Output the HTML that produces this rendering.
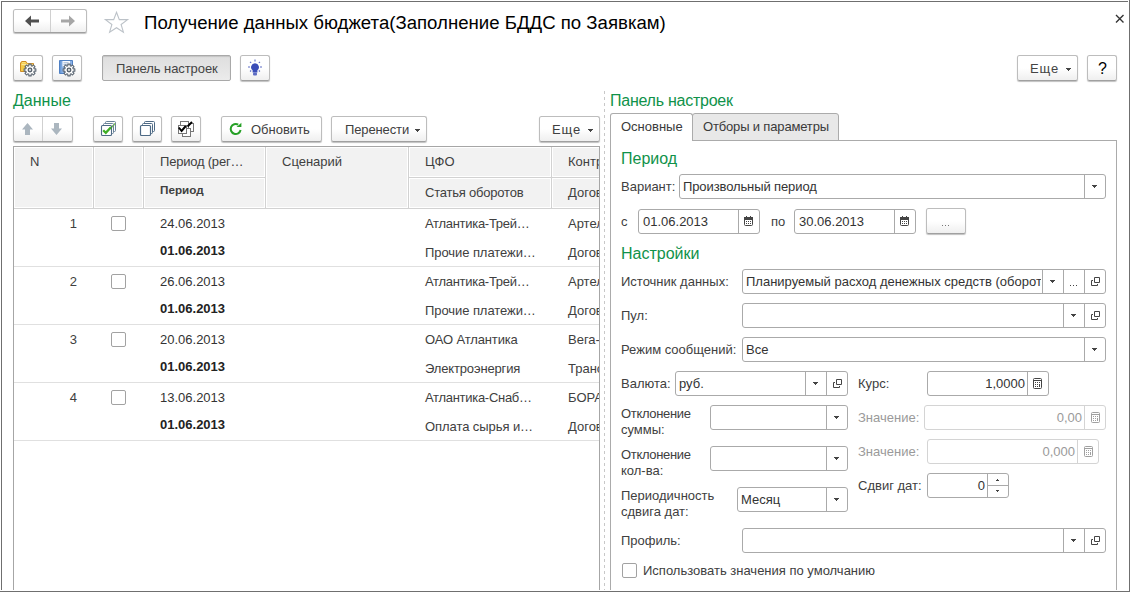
<!DOCTYPE html>
<html><head><meta charset="utf-8"><style>
*{margin:0;padding:0;box-sizing:border-box}
html,body{width:1130px;height:592px;overflow:hidden;background:#fff}
body{position:relative;font-family:"Liberation Sans",sans-serif;font-size:13px;color:#444}
.a{position:absolute}
.t{position:absolute;white-space:nowrap;line-height:16px;font-size:13px;color:#444}
.btn{position:absolute;border:1px solid #bdbdbd;border-bottom-color:#a0a0a0;border-radius:2.5px;background:linear-gradient(#fff 0%,#fff 50%,#efefef 100%);box-shadow:0 1px 1px rgba(0,0,0,.25)}
.inp{position:absolute;border:1px solid #aaaaaa;border-radius:3px;background:#fff}
.dis{border-color:#d4d4d4}
.grn{position:absolute;white-space:nowrap;color:#10924a;font-size:16px;line-height:20px}
.hd{position:absolute;background:#f2f2f2;box-shadow:inset 0 0 0 1px #fff}
.cb{position:absolute;width:15px;height:15px;border:1px solid #a2a2a2;border-radius:2px;background:#fff}
.b{font-weight:bold}
svg{position:absolute;overflow:visible}
</style></head><body>
<!-- window border -->
<div class="a" style="left:1px;top:1px;width:1127px;height:1px;background:#6f6f6f"></div><div class="a" style="left:1px;top:1px;width:1px;height:589px;background:#6f6f6f"></div><div class="a" style="left:1129px;top:0;width:1px;height:592px;background:#6f6f6f"></div><div class="a" style="left:0;top:591px;width:1130px;height:1px;background:#6f6f6f"></div>
<div class="btn" style="left:13px;top:9px;width:74px;height:24px;"></div>
<div class="a" style="left:50px;top:10px;width:1px;height:22px;background:#d0d0d0"></div>
<svg style="left:25px;top:15px" width="15" height="12" viewBox="0 0 15 12"><path d="M0 6L6 0.5V4.5H14V7.5H6V11.5Z" fill="#505050"/></svg>
<svg style="left:61px;top:15px" width="15" height="12" viewBox="0 0 15 12"><path d="M14 6L8 0.5V4.5H0V7.5H8V11.5Z" fill="#a6a6a6"/></svg>
<svg style="left:104px;top:10px" width="25" height="24" viewBox="0 0 25 24"><path d="M12.5 2.3L15.3 9.6L23.6 9.6L17.1 14.5L19.4 22.2L12.5 17.7L5.6 22.2L7.9 14.5L1.4 9.6L9.7 9.6Z" fill="none" stroke="#bcc2c8" stroke-width="1.1"/></svg>
<div class="t" style="left:144px;top:12px;font-size:18.63px;line-height:22px;color:#000">Получение данных бюджета(Заполнение БДДС по Заявкам)</div>
<svg style="left:1115px;top:14px" width="10" height="10" viewBox="0 0 10 10"><path d="M1 1L8.5 8.5M8.5 1L1 8.5" stroke="#333" stroke-width="1.4"/></svg>
<div class="btn" style="left:13px;top:55px;width:30px;height:26px;"></div>
<svg style="left:19px;top:59px" width="20" height="20" viewBox="0 0 20 20"><path d="M1.5 4V12.5H14.5V4.5H8.2L7 2.5H3L2 3.2Z" fill="#f4cb48" stroke="#cf8c26" stroke-width="1"/><path d="M2.5 5.5H13.5" stroke="#fde79a" stroke-width="1.3"/><path d="M3 3.5H6.5" stroke="#fbe07a" stroke-width="1"/><path d="M15.15 9.89 L16.87 9.75 L16.87 12.25 L15.15 12.11 L14.72 13.15 L16.03 14.27 L14.27 16.03 L13.15 14.72 L12.11 15.15 L12.25 16.87 L9.75 16.87 L9.89 15.15 L8.85 14.72 L7.73 16.03 L5.97 14.27 L7.28 13.15 L6.85 12.11 L5.13 12.25 L5.13 9.75 L6.85 9.89 L7.28 8.85 L5.97 7.73 L7.73 5.97 L8.85 7.28 L9.89 6.85 L9.75 5.13 L12.25 5.13 L12.11 6.85 L13.15 7.28 L14.27 5.97 L16.03 7.73 L14.72 8.85Z" fill="#fff" stroke="#5a6571" stroke-width="1.05" stroke-linejoin="round"/><circle cx="11" cy="11" r="1.8" fill="#d5d8db" stroke="#55606b" stroke-width="1.3"/></svg>
<div class="btn" style="left:52px;top:55px;width:30px;height:26px;"></div>
<svg style="left:58px;top:59px" width="20" height="20" viewBox="0 0 20 20"><path d="M1.5 1.5h13v13h-13Z" fill="#8cb2e6" stroke="#4f80c4" stroke-width="1"/><rect x="2" y="2" width="1.5" height="12" fill="#6a9ad8"/><rect x="4.5" y="2" width="7.5" height="5.5" fill="#f7f9fd"/><path d="M5.5 3.8h5M5.5 5.6h4" stroke="#8aa4c8" stroke-width="0.8"/><path d="M15.15 9.89 L16.87 9.75 L16.87 12.25 L15.15 12.11 L14.72 13.15 L16.03 14.27 L14.27 16.03 L13.15 14.72 L12.11 15.15 L12.25 16.87 L9.75 16.87 L9.89 15.15 L8.85 14.72 L7.73 16.03 L5.97 14.27 L7.28 13.15 L6.85 12.11 L5.13 12.25 L5.13 9.75 L6.85 9.89 L7.28 8.85 L5.97 7.73 L7.73 5.97 L8.85 7.28 L9.89 6.85 L9.75 5.13 L12.25 5.13 L12.11 6.85 L13.15 7.28 L14.27 5.97 L16.03 7.73 L14.72 8.85Z" fill="#fff" stroke="#5a6571" stroke-width="1.05" stroke-linejoin="round"/><circle cx="11" cy="11" r="1.8" fill="#d5d8db" stroke="#55606b" stroke-width="1.3"/></svg>
<div class="a" style="left:102px;top:55px;width:129px;height:26px;border:1px solid #a9a9a9;border-radius:2px;background:linear-gradient(#dedede,#ebebeb);box-shadow:inset 0 1px 1px rgba(0,0,0,.12)"></div>
<div class="t" style="left:116px;top:61px;color:#444;letter-spacing:-0.07px;">Панель настроек</div>
<div class="btn" style="left:240px;top:55px;width:30px;height:26px;"></div>
<svg style="left:247px;top:59px" width="16" height="18" viewBox="0 0 16 18"><path d="M8 4.3a3.9 3.9 0 0 1 2.4 7V13.5H5.6V11.3A3.9 3.9 0 0 1 8 4.3Z" fill="#3a4db8"/><rect x="6" y="13.5" width="4" height="3" rx="1" fill="#5d6cc4"/><path d="M8 0.5v2M3 2.8l1.2 1.2M13 2.8l-1.2 1.2M1 8h2M13 8h2M3 12.5l1.2-1M13 12.5l-1.2-1" stroke="#5a6ac6" stroke-width="1.05"/></svg>
<div class="btn" style="left:1017px;top:55px;width:61px;height:26px;"></div>
<div class="t" style="left:1030px;top:61px;color:#444;letter-spacing:0.9px;">Еще</div>
<svg style="left:1066px;top:68px" width="5" height="3" viewBox="0 0 5 3"><rect x="0" y="0" width="5" height="1" fill="#444"/><rect x="1" y="1" width="3" height="1" fill="#444"/><rect x="2" y="2" width="1" height="1" fill="#444"/></svg>
<div class="btn" style="left:1087px;top:55px;width:30px;height:26px;"></div>
<div class="t" style="left:1098px;top:61px;color:#000;font-size:16px">?</div>
<div class="grn" style="left:13px;top:91px">Данные</div>
<div class="btn" style="left:13px;top:116px;width:60px;height:26px;"></div>
<div class="a" style="left:42px;top:117px;width:1px;height:24px;background:#d0d0d0"></div>
<svg style="left:22px;top:123px" width="11" height="12" viewBox="0 0 11 12"><path d="M5.5 0L11 6.6H8V12H3V6.6H0Z" fill="#abb6bf"/></svg>
<svg style="left:51px;top:123px" width="11" height="12" viewBox="0 0 11 12"><path d="M5.5 12L11 5.4H8V0H3V5.4H0Z" fill="#abb6bf"/></svg>
<div class="btn" style="left:93px;top:116px;width:30px;height:26px;"></div>
<svg style="left:100px;top:120px" width="17" height="17" viewBox="0 0 17 17"><rect x="5.5" y="1.5" width="10" height="10" rx="1" fill="#fff" stroke="#6a8399"/><path d="M8.5 6.5l2 2 4.5-5" fill="none" stroke="#7cc35a" stroke-width="1.8"/><rect x="3.5" y="3.5" width="10" height="10" rx="1" fill="#fff" stroke="#6a8399"/><path d="M6.5 8.5l2 2 4.5-5" fill="none" stroke="#6abb48" stroke-width="1.8"/><rect x="1.5" y="5.5" width="10" height="10" rx="1" fill="#fff" stroke="#4e6a85" stroke-width="1.1"/><path d="M3.2 10.2l2.6 2.6 5.2-5.6" fill="none" stroke="#3fae25" stroke-width="2.3"/></svg>
<div class="btn" style="left:132px;top:116px;width:30px;height:26px;"></div>
<svg style="left:139px;top:120px" width="17" height="17" viewBox="0 0 17 17"><rect x="5.5" y="1.5" width="10" height="10" rx="1" fill="#fff" stroke="#4e6a85"/><rect x="3.5" y="3.5" width="10" height="10" rx="1" fill="#fff" stroke="#4e6a85"/><rect x="1.5" y="5.5" width="10" height="10" rx="1" fill="#fff" stroke="#4e6a85" stroke-width="1.2"/></svg>
<div class="btn" style="left:171px;top:116px;width:30px;height:26px;"></div>
<svg style="left:177px;top:120px" width="18" height="18" viewBox="0 0 18 18"><rect x="3.5" y="1.5" width="8" height="8" fill="#fff" stroke="#777"/><rect x="11.5" y="3.5" width="5" height="8" fill="#fff" stroke="#777"/><rect x="5.5" y="8.5" width="8" height="8" fill="#fff" stroke="#777"/><rect x="1.5" y="5.5" width="8" height="8" fill="#fff" stroke="#777"/><path d="M1.8 7.5l2.8 3.5 4.2-5" fill="none" stroke="#000" stroke-width="2"/><path d="M10.5 6.5l4.5-4.5" stroke="#000" stroke-width="2"/></svg>
<div class="btn" style="left:221px;top:116px;width:101px;height:26px;"></div>
<svg style="left:229px;top:122px" width="14" height="14" viewBox="0 0 14 14"><path d="M11.6 8A5 5 0 1 1 9.2 2.6" fill="none" stroke="#26a026" stroke-width="2"/><path d="M7.6 5.1L12.4 0.7V5.1Z" fill="#26a026"/></svg>
<div class="t" style="left:251px;top:122px;color:#404040;">Обновить</div>
<div class="btn" style="left:331px;top:116px;width:96px;height:26px;"></div>
<div class="t" style="left:345px;top:122px;color:#404040;letter-spacing:-0.12px;">Перенести</div>
<svg style="left:415px;top:129px" width="5" height="3" viewBox="0 0 5 3"><rect x="0" y="0" width="5" height="1" fill="#444"/><rect x="1" y="1" width="3" height="1" fill="#444"/><rect x="2" y="2" width="1" height="1" fill="#444"/></svg>
<div class="btn" style="left:539px;top:116px;width:61px;height:26px;"></div>
<div class="t" style="left:552px;top:122px;color:#404040;letter-spacing:0.9px;">Еще</div>
<svg style="left:588px;top:129px" width="5" height="3" viewBox="0 0 5 3"><rect x="0" y="0" width="5" height="1" fill="#444"/><rect x="1" y="1" width="3" height="1" fill="#444"/><rect x="2" y="2" width="1" height="1" fill="#444"/></svg>
<div class="a" style="left:13px;top:146px;width:587px;height:444px;border-left:1px solid #a6a6a6;border-right:1px solid #a6a6a6;border-top:1px solid #a6a6a6"></div>
<div class="a" style="left:14px;top:147px;width:585px;height:62px;background:#d2d2d2"></div>
<div class="hd" style="left:14px;top:147px;width:79px;height:61px"></div>
<div class="hd" style="left:94px;top:147px;width:49px;height:61px"></div>
<div class="hd" style="left:144px;top:147px;width:121px;height:30px"></div>
<div class="hd" style="left:144px;top:178px;width:121px;height:30px"></div>
<div class="hd" style="left:266px;top:147px;width:142px;height:61px"></div>
<div class="hd" style="left:409px;top:147px;width:142px;height:30px"></div>
<div class="hd" style="left:409px;top:178px;width:142px;height:30px"></div>
<div class="a" style="left:552px;top:147px;width:47px;height:61px;overflow:hidden"><div class="hd" style="left:0;top:0;width:60px;height:30px"></div><div class="hd" style="left:0;top:31px;width:60px;height:30px"></div><div class="t" style="left:16px;top:7px;color:#404040">Контрагент</div><div class="t" style="left:16px;top:38px;color:#404040">Договор</div></div>
<div class="t" style="left:30px;top:154px;color:#404040;">N</div>
<div class="t" style="left:160px;top:154px;color:#404040;letter-spacing:-0.21px;">Период (рег…</div>
<div class="t b" style="left:160px;top:182px;font-size:11.7px;color:#404040">Период</div>
<div class="t" style="left:282px;top:154px;color:#404040;">Сценарий</div>
<div class="t" style="left:425px;top:154px;color:#404040;">ЦФО</div>
<div class="t" style="left:425px;top:185px;color:#404040;letter-spacing:-0.21px;">Статья оборотов</div>
<div class="t" style="left:37px;width:40px;text-align:right;top:216px;color:#404040">1</div>
<div class="cb" style="left:111px;top:216px"></div>
<div class="t" style="left:160px;top:216px;color:#333;">24.06.2013</div>
<div class="t b" style="left:160px;top:243px;color:#222">01.06.2013</div>
<div class="t" style="left:425px;top:216px;color:#404040;letter-spacing:-0.29px;">Атлантика-Трей…</div>
<div class="t" style="left:425px;top:245px;color:#404040;letter-spacing:-0.07px;">Прочие платежи…</div>
<div class="a" style="left:552px;top:209px;width:47px;height:57px;overflow:hidden"><div class="t" style="left:16px;top:7px;color:#404040">Артель</div><div class="t" style="left:16px;top:36px;color:#404040">Договор</div></div>
<div class="a" style="left:14px;top:266px;width:585px;height:1px;background:#e0e0e0"></div>
<div class="t" style="left:37px;width:40px;text-align:right;top:274px;color:#404040">2</div>
<div class="cb" style="left:111px;top:274px"></div>
<div class="t" style="left:160px;top:274px;color:#333;">26.06.2013</div>
<div class="t b" style="left:160px;top:301px;color:#222">01.06.2013</div>
<div class="t" style="left:425px;top:274px;color:#404040;letter-spacing:-0.29px;">Атлантика-Трей…</div>
<div class="t" style="left:425px;top:303px;color:#404040;letter-spacing:-0.07px;">Прочие платежи…</div>
<div class="a" style="left:552px;top:267px;width:47px;height:57px;overflow:hidden"><div class="t" style="left:16px;top:7px;color:#404040">Артель</div><div class="t" style="left:16px;top:36px;color:#404040">Договор</div></div>
<div class="a" style="left:14px;top:324px;width:585px;height:1px;background:#e0e0e0"></div>
<div class="t" style="left:37px;width:40px;text-align:right;top:332px;color:#404040">3</div>
<div class="cb" style="left:111px;top:332px"></div>
<div class="t" style="left:160px;top:332px;color:#333;">20.06.2013</div>
<div class="t b" style="left:160px;top:359px;color:#222">01.06.2013</div>
<div class="t" style="left:425px;top:332px;color:#404040;letter-spacing:-0.13px;">ОАО Атлантика</div>
<div class="t" style="left:425px;top:361px;color:#404040;letter-spacing:-0.15px;">Электроэнергия</div>
<div class="a" style="left:552px;top:325px;width:47px;height:57px;overflow:hidden"><div class="t" style="left:16px;top:7px;color:#404040">Вега-</div><div class="t" style="left:16px;top:36px;color:#404040">Транспорт</div></div>
<div class="a" style="left:14px;top:382px;width:585px;height:1px;background:#e0e0e0"></div>
<div class="t" style="left:37px;width:40px;text-align:right;top:390px;color:#404040">4</div>
<div class="cb" style="left:111px;top:390px"></div>
<div class="t" style="left:160px;top:390px;color:#333;">13.06.2013</div>
<div class="t b" style="left:160px;top:417px;color:#222">01.06.2013</div>
<div class="t" style="left:425px;top:390px;color:#404040;letter-spacing:-0.29px;">Атлантика-Снаб…</div>
<div class="t" style="left:425px;top:419px;color:#404040;letter-spacing:-0.07px;">Оплата сырья и…</div>
<div class="a" style="left:552px;top:383px;width:47px;height:57px;overflow:hidden"><div class="t" style="left:16px;top:7px;color:#404040">БОРА</div><div class="t" style="left:16px;top:36px;color:#404040">Договор</div></div>
<div class="a" style="left:14px;top:440px;width:585px;height:1px;background:#e0e0e0"></div>
<div class="a" style="left:604px;top:91px;width:1px;height:499px;background:repeating-linear-gradient(#c8c8c8 0 3px,transparent 3px 6px)"></div>
<div class="grn" style="left:610px;top:91px;letter-spacing:-0.25px">Панель настроек</div>
<div class="a" style="left:692px;top:113px;width:147px;height:28px;border:1px solid #ababab;border-radius:3px 3px 0 0;background:#e8e8e8"></div>
<div class="a" style="left:610px;top:140px;width:507px;height:450px;border:1px solid #ababab;border-bottom:none"></div>
<div class="a" style="left:610px;top:113px;width:83px;height:28px;border:1px solid #ababab;border-bottom:none;border-radius:3px 3px 0 0;background:#fff"></div>
<div class="a" style="left:611px;top:140px;width:81px;height:1px;background:#fff"></div>
<div class="t" style="left:621px;top:119px;color:#3a3a3a;">Основные</div>
<div class="t" style="left:703px;top:119px;color:#3a3a3a;letter-spacing:-0.16px;">Отборы и параметры</div>
<div class="grn" style="left:621px;top:149px">Период</div>
<div class="t" style="left:621px;top:179px;color:#404040;">Вариант:</div>
<div class="inp" style="left:679px;top:174px;width:427px;height:25px"><div class="a" style="left:404px;top:0;bottom:0;width:1px;background:#aaaaaa"></div></div>
<div class="t" style="left:683px;top:179px;color:#333;letter-spacing:-0.11px;">Произвольный период</div>
<svg style="left:1092px;top:185px" width="5" height="3" viewBox="0 0 5 3"><rect x="0" y="0" width="5" height="1" fill="#444"/><rect x="1" y="1" width="3" height="1" fill="#444"/><rect x="2" y="2" width="1" height="1" fill="#444"/></svg>
<div class="t" style="left:621px;top:214px;color:#404040;">с</div>
<div class="inp" style="left:638px;top:209px;width:122px;height:25px"><div class="a" style="left:99px;top:0;bottom:0;width:1px;background:#aaaaaa"></div></div>
<div class="t" style="left:643px;top:214px;color:#333;">01.06.2013</div>
<svg style="left:744px;top:216px" width="9" height="10" viewBox="0 0 9 10"><rect x="0.5" y="1.5" width="8" height="8" rx="1" fill="#fff" stroke="#444"/><rect x="0" y="1" width="9" height="3" fill="#444"/><rect x="2" y="0" width="1" height="2" fill="#444"/><rect x="6" y="0" width="1" height="2" fill="#444"/><rect x="2" y="5" width="1" height="1" fill="#444"/><rect x="2" y="7" width="1" height="1" fill="#444"/><rect x="4" y="5" width="1" height="1" fill="#444"/><rect x="4" y="7" width="1" height="1" fill="#444"/><rect x="6" y="5" width="1" height="1" fill="#444"/><rect x="6" y="7" width="1" height="1" fill="#444"/></svg>
<div class="t" style="left:771px;top:214px;color:#404040;">по</div>
<div class="inp" style="left:794px;top:209px;width:122px;height:25px"><div class="a" style="left:99px;top:0;bottom:0;width:1px;background:#aaaaaa"></div></div>
<div class="t" style="left:799px;top:214px;color:#333;">30.06.2013</div>
<svg style="left:900px;top:216px" width="9" height="10" viewBox="0 0 9 10"><rect x="0.5" y="1.5" width="8" height="8" rx="1" fill="#fff" stroke="#444"/><rect x="0" y="1" width="9" height="3" fill="#444"/><rect x="2" y="0" width="1" height="2" fill="#444"/><rect x="6" y="0" width="1" height="2" fill="#444"/><rect x="2" y="5" width="1" height="1" fill="#444"/><rect x="2" y="7" width="1" height="1" fill="#444"/><rect x="4" y="5" width="1" height="1" fill="#444"/><rect x="4" y="7" width="1" height="1" fill="#444"/><rect x="6" y="5" width="1" height="1" fill="#444"/><rect x="6" y="7" width="1" height="1" fill="#444"/></svg>
<div class="btn" style="left:926px;top:208px;width:40px;height:26px;"></div>
<svg style="left:942px;top:225px" width="8" height="1" viewBox="0 0 8 1"><rect x="0" y="0" width="1" height="1" fill="#777"/><rect x="3" y="0" width="1" height="1" fill="#777"/><rect x="6" y="0" width="1" height="1" fill="#777"/></svg>
<div class="grn" style="left:621px;top:244px">Настройки</div>
<div class="t" style="left:621px;top:274px;color:#404040;">Источник данных:</div>
<div class="inp" style="left:742px;top:269px;width:364px;height:25px"><div class="a" style="left:299px;top:0;bottom:0;width:1px;background:#aaaaaa"></div><div class="a" style="left:320px;top:0;bottom:0;width:1px;background:#aaaaaa"></div><div class="a" style="left:341px;top:0;bottom:0;width:1px;background:#aaaaaa"></div></div>
<div class="a" style="left:743px;top:270px;width:298px;height:23px;overflow:hidden"><div class="t" style="left:3px;top:4px;color:#333">Планируемый расход денежных средств (оборот)</div></div>
<svg style="left:1050px;top:280px" width="5" height="3" viewBox="0 0 5 3"><rect x="0" y="0" width="5" height="1" fill="#444"/><rect x="1" y="1" width="3" height="1" fill="#444"/><rect x="2" y="2" width="1" height="1" fill="#444"/></svg>
<svg style="left:1070px;top:285px" width="8" height="1" viewBox="0 0 8 1"><rect x="0" y="0" width="1" height="1" fill="#444"/><rect x="3" y="0" width="1" height="1" fill="#444"/><rect x="6" y="0" width="1" height="1" fill="#444"/></svg>
<svg style="left:1091px;top:277px" width="10" height="10" viewBox="0 0 10 10"><path d="M3.5 0.5h5v5h-5Z" fill="none" stroke="#444" stroke-width="1"/><path d="M2 3.5H0.5V8.5H6.5V7" fill="none" stroke="#444" stroke-width="1"/></svg>
<div class="t" style="left:621px;top:308px;color:#404040;">Пул:</div>
<div class="inp" style="left:742px;top:303px;width:364px;height:25px"><div class="a" style="left:320px;top:0;bottom:0;width:1px;background:#aaaaaa"></div><div class="a" style="left:341px;top:0;bottom:0;width:1px;background:#aaaaaa"></div></div>
<svg style="left:1071px;top:314px" width="5" height="3" viewBox="0 0 5 3"><rect x="0" y="0" width="5" height="1" fill="#444"/><rect x="1" y="1" width="3" height="1" fill="#444"/><rect x="2" y="2" width="1" height="1" fill="#444"/></svg>
<svg style="left:1091px;top:311px" width="10" height="10" viewBox="0 0 10 10"><path d="M3.5 0.5h5v5h-5Z" fill="none" stroke="#444" stroke-width="1"/><path d="M2 3.5H0.5V8.5H6.5V7" fill="none" stroke="#444" stroke-width="1"/></svg>
<div class="t" style="left:621px;top:342px;color:#404040;">Режим сообщений:</div>
<div class="inp" style="left:742px;top:337px;width:364px;height:25px"><div class="a" style="left:341px;top:0;bottom:0;width:1px;background:#aaaaaa"></div></div>
<div class="t" style="left:746px;top:342px;color:#333;">Все</div>
<svg style="left:1092px;top:348px" width="5" height="3" viewBox="0 0 5 3"><rect x="0" y="0" width="5" height="1" fill="#444"/><rect x="1" y="1" width="3" height="1" fill="#444"/><rect x="2" y="2" width="1" height="1" fill="#444"/></svg>
<div class="t" style="left:621px;top:376px;color:#404040;">Валюта:</div>
<div class="inp" style="left:675px;top:371px;width:173px;height:25px"><div class="a" style="left:129px;top:0;bottom:0;width:1px;background:#aaaaaa"></div><div class="a" style="left:150px;top:0;bottom:0;width:1px;background:#aaaaaa"></div></div>
<div class="t" style="left:679px;top:376px;color:#333;">руб.</div>
<svg style="left:813px;top:382px" width="5" height="3" viewBox="0 0 5 3"><rect x="0" y="0" width="5" height="1" fill="#444"/><rect x="1" y="1" width="3" height="1" fill="#444"/><rect x="2" y="2" width="1" height="1" fill="#444"/></svg>
<svg style="left:833px;top:379px" width="10" height="10" viewBox="0 0 10 10"><path d="M3.5 0.5h5v5h-5Z" fill="none" stroke="#444" stroke-width="1"/><path d="M2 3.5H0.5V8.5H6.5V7" fill="none" stroke="#444" stroke-width="1"/></svg>
<div class="t" style="left:858px;top:376px;color:#404040;">Курс:</div>
<div class="inp" style="left:927px;top:371px;width:122px;height:25px"><div class="a" style="left:99px;top:0;bottom:0;width:1px;background:#aaaaaa"></div></div>
<div class="t" style="left:935px;width:90px;text-align:right;top:376px;color:#333">1,0000</div>
<svg style="left:1033px;top:378px" width="9" height="11" viewBox="0 0 9 11"><rect x="0.5" y="0.5" width="8" height="10" rx="1" fill="#fff" stroke="#444"/><rect x="1" y="2" width="7" height="1" fill="#444"/><rect x="2" y="4" width="1" height="1" fill="#444"/><rect x="2" y="6" width="1" height="1" fill="#444"/><rect x="2" y="8" width="1" height="1" fill="#444"/><rect x="4" y="4" width="1" height="1" fill="#444"/><rect x="4" y="6" width="1" height="1" fill="#444"/><rect x="4" y="8" width="1" height="1" fill="#444"/><rect x="6" y="4" width="1" height="1" fill="#444"/><rect x="6" y="6" width="1" height="3" fill="#444"/></svg>
<div class="t" style="left:621px;top:406px;color:#404040;letter-spacing:-0.33px;">Отклонение</div>
<div class="t" style="left:621px;top:422px;color:#404040;">суммы:</div>
<div class="inp" style="left:710px;top:405px;width:138px;height:25px"><div class="a" style="left:115px;top:0;bottom:0;width:1px;background:#aaaaaa"></div></div>
<svg style="left:834px;top:416px" width="5" height="3" viewBox="0 0 5 3"><rect x="0" y="0" width="5" height="1" fill="#444"/><rect x="1" y="1" width="3" height="1" fill="#444"/><rect x="2" y="2" width="1" height="1" fill="#444"/></svg>
<div class="t" style="left:858px;top:410px;color:#9a9a9a;">Значение:</div>
<div class="inp dis" style="left:924px;top:405px;width:182px;height:25px"><div class="a" style="left:159px;top:0;bottom:0;width:1px;background:#d4d4d4"></div></div>
<div class="t" style="left:992px;width:90px;text-align:right;top:410px;color:#9a9a9a">0,00</div>
<svg style="left:1091px;top:412px" width="9" height="11" viewBox="0 0 9 11"><rect x="0.5" y="0.5" width="8" height="10" rx="1" fill="#fff" stroke="#a0a0a0"/><rect x="1" y="2" width="7" height="1" fill="#a0a0a0"/><rect x="2" y="4" width="1" height="1" fill="#a0a0a0"/><rect x="2" y="6" width="1" height="1" fill="#a0a0a0"/><rect x="2" y="8" width="1" height="1" fill="#a0a0a0"/><rect x="4" y="4" width="1" height="1" fill="#a0a0a0"/><rect x="4" y="6" width="1" height="1" fill="#a0a0a0"/><rect x="4" y="8" width="1" height="1" fill="#a0a0a0"/><rect x="6" y="4" width="1" height="1" fill="#a0a0a0"/><rect x="6" y="6" width="1" height="3" fill="#a0a0a0"/></svg>
<div class="t" style="left:621px;top:447px;color:#404040;letter-spacing:-0.33px;">Отклонение</div>
<div class="t" style="left:621px;top:463px;color:#404040;">кол-ва:</div>
<div class="inp" style="left:710px;top:446px;width:138px;height:25px"><div class="a" style="left:115px;top:0;bottom:0;width:1px;background:#aaaaaa"></div></div>
<svg style="left:834px;top:457px" width="5" height="3" viewBox="0 0 5 3"><rect x="0" y="0" width="5" height="1" fill="#444"/><rect x="1" y="1" width="3" height="1" fill="#444"/><rect x="2" y="2" width="1" height="1" fill="#444"/></svg>
<div class="t" style="left:858px;top:444px;color:#9a9a9a;">Значение:</div>
<div class="inp dis" style="left:927px;top:439px;width:172px;height:25px"><div class="a" style="left:149px;top:0;bottom:0;width:1px;background:#d4d4d4"></div></div>
<div class="t" style="left:985px;width:90px;text-align:right;top:444px;color:#9a9a9a">0,000</div>
<svg style="left:1084px;top:446px" width="9" height="11" viewBox="0 0 9 11"><rect x="0.5" y="0.5" width="8" height="10" rx="1" fill="#fff" stroke="#a0a0a0"/><rect x="1" y="2" width="7" height="1" fill="#a0a0a0"/><rect x="2" y="4" width="1" height="1" fill="#a0a0a0"/><rect x="2" y="6" width="1" height="1" fill="#a0a0a0"/><rect x="2" y="8" width="1" height="1" fill="#a0a0a0"/><rect x="4" y="4" width="1" height="1" fill="#a0a0a0"/><rect x="4" y="6" width="1" height="1" fill="#a0a0a0"/><rect x="4" y="8" width="1" height="1" fill="#a0a0a0"/><rect x="6" y="4" width="1" height="1" fill="#a0a0a0"/><rect x="6" y="6" width="1" height="3" fill="#a0a0a0"/></svg>
<div class="t" style="left:621px;top:488px;color:#404040;">Периодичность</div>
<div class="t" style="left:621px;top:504px;color:#404040;">сдвига дат:</div>
<div class="inp" style="left:737px;top:487px;width:111px;height:25px"><div class="a" style="left:88px;top:0;bottom:0;width:1px;background:#aaaaaa"></div></div>
<div class="t" style="left:741px;top:492px;color:#333;">Месяц</div>
<svg style="left:834px;top:498px" width="5" height="3" viewBox="0 0 5 3"><rect x="0" y="0" width="5" height="1" fill="#444"/><rect x="1" y="1" width="3" height="1" fill="#444"/><rect x="2" y="2" width="1" height="1" fill="#444"/></svg>
<div class="t" style="left:858px;top:478px;color:#404040;">Сдвиг дат:</div>
<div class="inp" style="left:927px;top:473px;width:82px;height:25px"><div class="a" style="left:59px;top:0;bottom:0;width:1px;background:#aaaaaa"></div></div>
<div class="a" style="left:988px;top:485px;width:20px;height:1px;background:#aaaaaa"></div>
<svg style="left:996px;top:479px" width="3" height="2" viewBox="0 0 3 2"><rect x="1" y="0" width="1" height="1" fill="#444"/><rect x="0" y="1" width="3" height="1" fill="#444"/></svg>
<svg style="left:996px;top:490px" width="3" height="2" viewBox="0 0 3 2"><rect x="0" y="0" width="3" height="1" fill="#444"/><rect x="1" y="1" width="1" height="1" fill="#444"/></svg>
<div class="t" style="left:935px;width:50px;text-align:right;top:478px;color:#333">0</div>
<div class="t" style="left:621px;top:533px;color:#404040;">Профиль:</div>
<div class="inp" style="left:742px;top:528px;width:364px;height:25px"><div class="a" style="left:320px;top:0;bottom:0;width:1px;background:#aaaaaa"></div><div class="a" style="left:341px;top:0;bottom:0;width:1px;background:#aaaaaa"></div></div>
<svg style="left:1071px;top:539px" width="5" height="3" viewBox="0 0 5 3"><rect x="0" y="0" width="5" height="1" fill="#444"/><rect x="1" y="1" width="3" height="1" fill="#444"/><rect x="2" y="2" width="1" height="1" fill="#444"/></svg>
<svg style="left:1091px;top:536px" width="10" height="10" viewBox="0 0 10 10"><path d="M3.5 0.5h5v5h-5Z" fill="none" stroke="#444" stroke-width="1"/><path d="M2 3.5H0.5V8.5H6.5V7" fill="none" stroke="#444" stroke-width="1"/></svg>
<div class="cb" style="left:622px;top:563px"></div>
<div class="t" style="left:643px;top:563px;color:#404040;">Использовать значения по умолчанию</div>
</body></html>
